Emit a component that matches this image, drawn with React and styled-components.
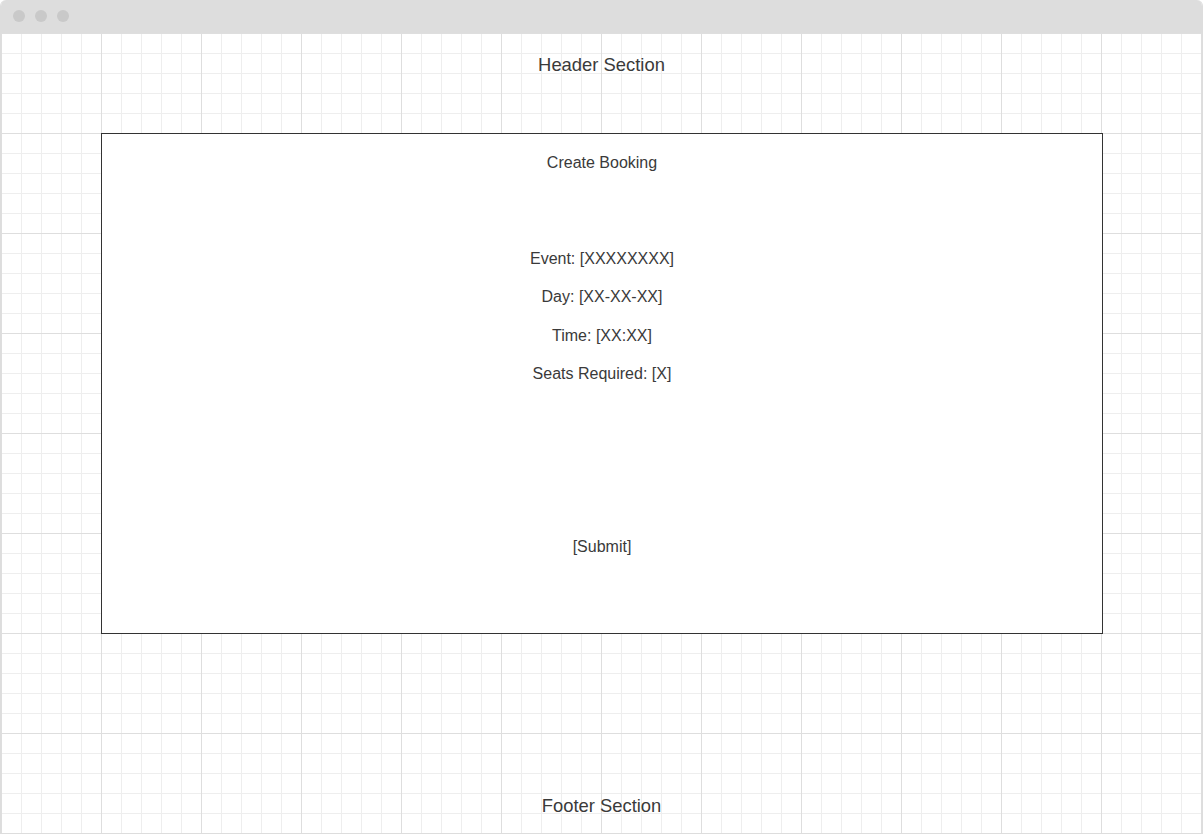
import React from 'react';
import styled, { createGlobalStyle } from 'styled-components';

const GlobalStyle = createGlobalStyle`
  html, body {
    margin: 0;
    padding: 0;
    background: #ffffff;
  }
  body {
    font-family: "Liberation Sans", Arial, sans-serif;
    color: #3a3a3a;
  }
`;

const Window = styled.div`
  width: 1203px;
  height: 834px;
  box-sizing: border-box;
  border: 1px solid #dddddd;
  border-top: none;
  border-radius: 6px 6px 0 0;
  overflow: hidden;
  display: flex;
  flex-direction: column;
`;

const TitleBar = styled.div`
  height: 33px;
  flex-shrink: 0;
  background: #dddddd;
  display: flex;
  align-items: center;
  gap: 10px;
  padding-left: 12px;
  padding-bottom: 1px;
  box-sizing: border-box;
`;

const Dot = styled.span`
  width: 12px;
  height: 12px;
  border-radius: 50%;
  background: #c9c9c9;
`;

const Canvas = styled.div`
  flex: 1;
  display: flex;
  flex-direction: column;
  background-color: #ffffff;
  background-image:
    linear-gradient(to right, #dedede 1px, transparent 1px),
    linear-gradient(to bottom, #dedede 1px, transparent 1px),
    linear-gradient(to right, #eeeeee 1px, transparent 1px),
    linear-gradient(to bottom, #eeeeee 1px, transparent 1px);
  background-size: 100px 100px, 100px 100px, 20px 20px, 20px 20px;
`;

const Header = styled.header`
  height: 100px;
  flex-shrink: 0;
  box-sizing: border-box;
  padding-top: 21px;
  text-align: center;
  font-size: 18.4px;
  line-height: 21px;
`;

const Booking = styled.section`
  margin-left: 100px;
  width: 1002px;
  height: 501px;
  flex-shrink: 0;
  box-sizing: border-box;
  border: 1px solid #333333;
  background: #ffffff;
  display: flex;
  flex-direction: column;
  align-items: center;
  padding-top: 19px;
  font-size: 16px;
  line-height: 20px;
`;

const Title = styled.h2`
  margin: 0;
  font-size: 16px;
  font-weight: normal;
  line-height: 20px;
`;

const Fields = styled.div`
  margin-top: 76px;
  display: flex;
  flex-direction: column;
  align-items: center;
  gap: 18.4px;
`;

const Field = styled.div`
  line-height: 20px;
`;

const Submit = styled.div`
  margin-top: 153px;
  line-height: 20px;
`;

const Footer = styled.footer`
  flex: 1;
  display: flex;
  align-items: flex-end;
  justify-content: center;
  padding-bottom: 17px;
  font-size: 18.4px;
  line-height: 21px;
`;

const fields = [
  'Event: [XXXXXXXX]',
  'Day: [XX-XX-XX]',
  'Time: [XX:XX]',
  'Seats Required: [X]',
];

export default function App() {
  return (
    <>
      <GlobalStyle />
      <Window>
        <TitleBar>
          <Dot />
          <Dot />
          <Dot />
        </TitleBar>
        <Canvas>
          <Header>Header Section</Header>
          <Booking>
            <Title>Create Booking</Title>
            <Fields>
              {fields.map((f) => (
                <Field key={f}>{f}</Field>
              ))}
            </Fields>
            <Submit>[Submit]</Submit>
          </Booking>
          <Footer>Footer Section</Footer>
        </Canvas>
      </Window>
    </>
  );
}
